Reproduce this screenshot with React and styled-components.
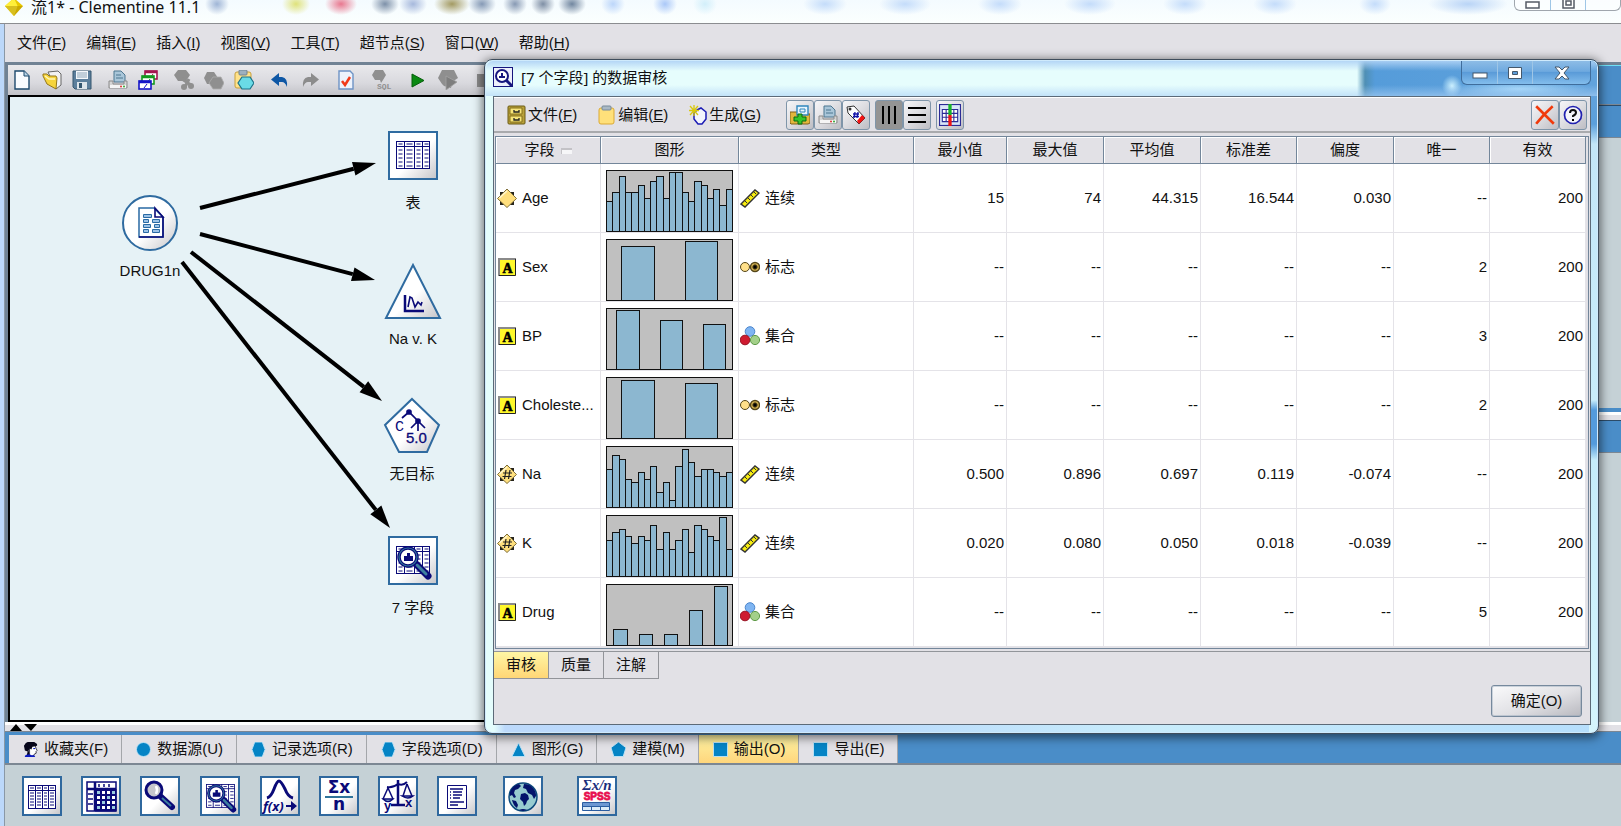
import React, { useState } from "react";
import styled, { createGlobalStyle } from "styled-components";

const SANS = `"Liberation Sans", "Noto Sans CJK SC", sans-serif`;
const NAVY = "#0a0a78";

const GlobalStyle = createGlobalStyle`
  * { box-sizing: border-box; }
  body {
    margin: 0;
    font-family: ${SANS};
    font-size: 15px;
    line-height: 20px;
    color: #111;
    overflow: hidden;
  }
  button { font: inherit; color: inherit; margin: 0; padding: 0; border: 0; background: none; }
  svg { display: block; flex: none; }
`;

// ================= Main window =================
const Shell = styled.div`
  position: relative;
  display: flex;
  flex-direction: column;
  min-height: 100vh;
  padding-left: 5px;
  background: linear-gradient(90deg, #bcd8fa 4px, #8a98a6 4px, #8a98a6 5px, transparent 5px);
`;

const blob = (x, color, w = 12) =>
  `radial-gradient(ellipse ${w}px 11px at ${x}px 4px, ${color}, transparent)`;

const TitleBar = styled.header`
  display: flex;
  justify-content: space-between;
  height: 24px;
  margin-left: -5px;
  padding-left: 5px;
  overflow: hidden;
  border-bottom: 1px solid #8b8d90;
  background:
    ${[
      blob(217, "#9fb5d6"), blob(296, "#dfe27a", 14), blob(341, "#e8788f", 16), blob(385, "#7d90a8", 14),
      blob(413, "#a6b8dc", 14), blob(452, "#a39a62", 18), blob(482, "#8599b5", 14), blob(515, "#8799b3"),
      blob(543, "#7e8ea4"), blob(572, "#71869f", 14), blob(613, "#bcd6fa"), blob(665, "#aac8f8"),
      blob(705, "#d2effa"), blob(825, "#c4dcfa", 22), blob(905, "#c4dcfa", 26), blob(1000, "#c4dcfa", 22),
      blob(1090, "#c4dcfa", 26), blob(1185, "#c4dcfa", 22), blob(1275, "#c4dcfa", 22), blob(1375, "#c4dcfa", 16),
      blob(1468, "#b9d4f6", 40),
    ].join(",")},
    linear-gradient(#f4fbff, #fbfffe);
`;

const TitleText = styled.h1`
  display: flex;
  align-items: center;
  align-self: flex-end;
  gap: 8px;
  margin: 0 0 5px;
  font: 400 16px/22px "Noto Sans", "Noto Sans CJK SC", sans-serif;
`;

const WindowButtons = styled.div`
  display: flex;
  align-self: flex-start;
  height: ${({ $tall }) => ($tall ? 24 : 11)}px;
  border: 1px solid ${({ $tall }) => ($tall ? "#3f6d9c" : "#9fa6ad")};
  border-top: 0;
  border-radius: 0 0 6px 6px;
  overflow: hidden;
  background: ${({ $tall }) =>
    $tall ? "linear-gradient(#8dbce6, #6ea9df 45%, #5a9bd8 50%, #83bdec)" : "rgba(255,255,255,.6)"};
`;

const WindowButton = styled.button`
  display: flex;
  align-items: center;
  justify-content: center;
  width: ${({ $wide }) => ($wide ? 58 : 35)}px;
  border-left: 1px solid #9fc6e6;
  &:first-child { border-left: 0; }
`;

const MenuBar = styled.nav`
  display: flex;
  align-items: center;
  gap: 20px;
  height: 38px;
  padding-left: 12px;
  background: #e2e1e6;
`;

const Work = styled.main`
  display: flex;
  flex: 1;
  padding: 3px 0 0 3px;
  background: #708294;
`;

const StreamColumn = styled.section`
  display: flex;
  flex: 1;
  flex-direction: column;
`;

const ToolBar = styled.div`
  display: flex;
  align-items: center;
  gap: 16px;
  height: 30px;
  padding-left: 4px;
  background: linear-gradient(#e9e9ec, #d9d9de 60%, #c3c3c8);
`;

const ToolGroup = styled.div`
  display: flex;
  gap: 10px;
`;

const ToolButton = styled.button`
  width: 20px;
  height: 20px;
`;

const Canvas = styled.div`
  position: relative;
  flex: 1;
  border: solid #000;
  border-width: 2px 0 2px 2px;
  background: #e6f2f6;
`;

const Links = styled.svg`
  position: absolute;
  inset: 0;
`;

const Node = styled.figure`
  position: absolute;
  left: ${({ $x }) => $x}px;
  top: ${({ $y }) => $y}px;
  display: flex;
  flex-direction: column;
  align-items: center;
  gap: 9px;
  width: 90px;
  margin: 0;
`;

const SidePanel = styled.aside`
  display: flex;
  flex-direction: column;
  width: 256px;
  background: #c5d1d6;
`;

const SideBar = styled.div`
  height: ${({ $tall }) => ($tall ? 40 : 33)}px;
  background: #4a8dc8;
  border-top: 1px solid ${({ $tall }) => ($tall ? "#6fe0f5" : "#2c4b68")};
  border-bottom: 1px solid #7c8793;
`;

const SideSplit = styled.div`
  height: 12px;
  border-top: 4px solid #4a8dc8;
  background: linear-gradient(#fff 3px, #e2e1e6 3px);
`;

const SideBody = styled.div`
  flex: 1;
`;

const Splitter = styled.div`
  height: 10px;
  padding: 2px 0 0 5px;
  border-bottom: 1px solid #7c8793;
  background: linear-gradient(#fff 3px, #e2e1e6 3px);
`;

const PaletteTabs = styled.div`
  display: flex;
  height: 33px;
  padding: 3px 0 0 4px;
  background: #4a8dc8;
  border-bottom: 2px solid #7c8793;
`;

const PaletteTab = styled.button`
  display: flex;
  align-items: center;
  gap: 6px;
  padding: 0 13px 0 14px;
  white-space: nowrap;
  border-right: 1px solid #a4a6aa;
  background: ${({ $active }) => ($active ? "linear-gradient(#fdf3a4, #ffd67c)" : "#e2e1e6")};
`;

const Palette = styled.div`
  display: flex;
  gap: 19px;
  height: 61px;
  padding: 11px 0 0 17px;
  background: #c5d1d6;
`;

const PaletteButton = styled.button`
  width: 40px;
  height: 40px;
  margin-left: ${({ $gap }) => $gap || 0}px;
  border: 2px solid #2f689e;
  background: linear-gradient(135deg, #fff 55%, #c9c9cc);
`;

// ================= Audit window =================
const Dialog = styled.section`
  position: absolute;
  top: 59px;
  left: 484px;
  right: 22px;
  display: flex;
  flex-direction: column;
  padding: 0 7px 8px 8px;
  border: 1px solid #3f4d5c;
  border-radius: 8px;
  box-shadow: inset 0 0 0 1px #cfeafc, 0 2px 10px 2px rgba(0, 0, 0, .5);
  background:
    linear-gradient(#6ba7dd 0, #5b9fdb 64px, #c3e6f8 84px, #c9edfb 340px, #549bdc 350px, #549bdc 384px, #c5ecfa 400px, #d5f5fd) right / 9px 100% no-repeat,
    linear-gradient(90deg, #e4fdfc 9px, #bcd9fb 20px, #b8d8fc 30%, #c8ecfb 60%, #b6defc);
`;

const DialogTitle = styled.header`
  display: flex;
  justify-content: space-between;
  height: 35px;
  margin: 1px -6px 0 -7px;
  padding: 0 6px 0 7px;
  border-radius: 7px 7px 0 0;
  background:
    linear-gradient(rgba(175, 210, 245, .9), transparent 10px, transparent 24px, rgba(170, 208, 245, .6)),
    radial-gradient(ellipse 10px 11px at calc(100% - 145px) 25px, #cdf1ff, transparent),
    radial-gradient(ellipse 70px 9px at calc(100% - 78px) 28px, #a4d6f8, transparent),
    linear-gradient(90deg, #e6fdfd calc(100% - 240px), #4f8fb4 calc(100% - 232px), #559cda calc(100% - 222px), #62a3dc);
`;

const DialogCaption = styled.h2`
  display: flex;
  align-items: center;
  gap: 8px;
  margin: 0 0 3px;
  font: 400 15px/20px "Noto Sans", "Noto Sans CJK SC", sans-serif;
`;

const DialogBody = styled.div`
  border: 1px solid #5c6a78;
  background: #e2e1e6;
`;

const DialogTools = styled.div`
  display: flex;
  align-items: center;
  height: 36px;
  padding: 0 3px 0 13px;
  border-top: 1px solid #fff;
  border-bottom: 2px solid #a9aaad;
`;

const MenuButton = styled.button`
  display: flex;
  align-items: center;
  gap: 1px;
  margin-right: 20px;
  white-space: nowrap;
`;

const ButtonGroup = styled.div`
  display: flex;
  margin-left: 5px;
  &:last-child { margin-left: auto; }
`;

const IconButton = styled.button`
  display: flex;
  align-items: center;
  justify-content: center;
  width: 28px;
  height: 30px;
  border: 1px solid #7f95a9;
  border-radius: 3px;
  background: ${({ $on }) => ($on ? "#949494" : "linear-gradient(135deg, #f6f6f8, #dddde1 50%, #bdbdc3)")};
`;

const TableFrame = styled.div`
  margin: 3px 1px 2px 1px;
  padding: 0 4px 1px 0;
  border: 1px solid #73869a;
`;

const Table = styled.table`
  width: 100%;
  table-layout: fixed;
  border-collapse: separate;
  border-spacing: 0;
  background: #fff;
`;

const Th = styled.th`
  height: 27px;
  padding: 0;
  font-weight: 400;
  background: #e2e1e6;
  border: solid #73869a;
  border-width: 0 1px 1px 0;
  box-shadow: inset 1px 1px #fff;
`;

const SortMark = styled.span`
  display: inline-block;
  width: 11px;
  height: 6px;
  margin-left: 6px;
  border: solid #c3c2c6;
  border-width: 2px 0 0 1px;
  background: #f6f6f8;
  vertical-align: middle;
`;

const Td = styled.td`
  height: 69px;
  padding: ${({ $chart }) => ($chart ? "6px 0 0 5px" : "0 2px 0 1px")};
  text-align: ${({ $num }) => ($num ? "right" : "left")};
  border: solid #e4e3e8;
  border-width: 0 1px 1px 0;
`;

const IconText = styled.div`
  display: flex;
  align-items: center;
  gap: 5px;
  white-space: nowrap;
`;

const SheetTabs = styled.div`
  display: flex;
  border-top: 1px solid #92959a;
`;

const SheetTab = styled.button`
  width: 55px;
  height: 27px;
  border: solid #929499;
  border-width: 0 1px 1px 0;
  background: ${({ $active }) => ($active ? "linear-gradient(#fff6a4, #ffd676)" : "#e2e1e6")};
`;

const DialogFooter = styled.footer`
  display: flex;
  justify-content: flex-end;
  padding: 6px 8px 7px;
`;

const OkButton = styled.button`
  width: 91px;
  height: 32px;
  border: 1px solid #76899d;
  border-radius: 3px;
  box-shadow: inset 0 0 0 1px rgba(140, 160, 180, .4);
  background: linear-gradient(160deg, #fafafb, #e0e0e4 55%, #b9b9bf);
`;

// ================= Icons =================
const Icon = ({ size = 20, box = 20, children }) => (
  <svg width={size} height={size} viewBox={`0 0 ${box} ${box}`} aria-hidden="true">{children}</svg>
);

const Gem = () => (
  <Icon size={18}>
    <path d="M10 0 20 9 10 20 0 9z" fill="#e8c800" />
    <path d="M10 0 14 9 10 20 0 9z" fill="#ffef3a" />
    <path d="M0 9h20L10 20z" fill="#a88600" opacity=".45" />
  </Icon>
);

const NewFile = () => (
  <Icon><path d="M3 1h9l5 5v13H3z" fill="#fafcff" stroke="#1e4a6e" strokeWidth="1.4" /><path d="M12 1v5h5" fill="#b8d3e6" stroke="#1e4a6e" /></Icon>
);

const OpenFile = () => (
  <Icon>
    <path d="M6 2 16 1l3 3v11l-5 4z" fill="#f2f2f2" stroke="#666" />
    <path d="M1 4h4l2 2h7l1 2-1 11-9-5-4-8z" fill="#f6d43c" stroke="#94771a" />
    <path d="m3 6 4 3h6" fill="none" stroke="#fff6b8" strokeWidth="1.5" />
  </Icon>
);

const SaveFile = () => (
  <Icon>
    <path d="M1 1h18v18H3l-2-2z" fill="#5c7f9c" stroke="#34566f" />
    <path d="M4 1h12v8H4z" fill="#f4f8fb" /><path d="M5 3h10M5 5h10M5 7h10" stroke="#8da5b8" />
    <path d="M5 12h10v7H5z" fill="#dce4ea" /><path d="M7 13h3v5H7z" fill="#34566f" />
  </Icon>
);

const Printer = () => (
  <Icon>
    <path d="M6 1h7l4 4v7H6z" fill="#a9c6d9" stroke="#4d7690" /><path d="M8 5h5M8 8h7" stroke="#4d7690" />
    <path d="M1 11h4v3h11v-3h3v7H1z" fill="#d5d5d5" stroke="#8b8b8b" />
    <path d="M2 15h16v3H2z" fill="#f5f5f5" /><circle cx="13" cy="16.500" r="1" fill="#d33" /><circle cx="16" cy="16.500" r="1" fill="#3a3" />
  </Icon>
);

const StackIcon = () => (
  <Icon>
    {[[7, 1, "#a3164f"], [4, 6, "#139a1f"], [1, 11, "#1414c8"]].map(([x, y, c]) => (
      <g key={c}>
        <rect x={x} y={y} width="12" height="8" fill="#fff" stroke={c} strokeWidth="1.6" />
        <path d={`M${x} ${y + 1}h12`} stroke={c} strokeWidth="2.500" />
        <path d={`m${x + 5} ${y + 7} 3-4`} stroke={c} />
      </g>
    ))}
  </Icon>
);

const CutIcon = () => (
  <Icon>
    <path d="M4 0h8l4 5-4 6H4L0 5z" fill="#8f8f8f" />
    <path d="m8 9 9 6M15 9l-4 8" stroke="#8f8f8f" strokeWidth="3" /><circle cx="10" cy="17" r="3" fill="#8f8f8f" /><circle cx="17" cy="16" r="3" fill="#8f8f8f" />
  </Icon>
);

const CopyIcon = () => (
  <Icon>
    <path d="M3 2h7l4 6-4 6H3L0 8z" fill="#8f8f8f" />
    <path d="M9 7h8l3 6-3 6H9l-4-6z" fill="#8f8f8f" stroke="#adadad" strokeWidth=".8" />
  </Icon>
);

const PasteIcon = () => (
  <Icon>
    <rect x="1" y="2" width="16" height="16" rx="2" fill="#ffe28a" stroke="#c79f3c" />
    <rect x="5" y="0" width="8" height="5" rx="1" fill="#9db0bf" stroke="#6f8393" />
    <path d="M8 7h8l4 6-4 6H8l-4-6z" fill="#6adbe6" stroke="#1b7187" strokeWidth="1.2" />
  </Icon>
);

const UndoIcon = () => (
  <Icon><path d="M1 9.500 9 3v4h3q6 1 5 10-2-5-5-5H9v4z" fill="#0e57a5" /></Icon>
);

const RedoIcon = () => (
  <Icon><path d="M19 9.500 11 3v4H8q-6 1-5 10 2-5 5-5h3v4z" fill="#8c8c8c" /></Icon>
);

const CheckIcon = () => (
  <Icon><path d="M3 1h11l3 3v15H3z" fill="#edf3fc" stroke="#6d93c5" strokeWidth="1.4" /><path d="m6 11 3 4 5-8" fill="none" stroke="#f03a1a" strokeWidth="2.500" /></Icon>
);

const SqlIcon = () => (
  <Icon>
    <path d="M3 0h8l3 5-3 5-2 3-1-3H3L0 5z" fill="#8f8f8f" />
    <text x="5" y="19" fontSize="8" fontWeight="700" fill="#8f8f8f" fontFamily="Liberation Mono, monospace">SQL</text>
  </Icon>
);

const PlayIcon = () => <Icon><path d="m4 4 12 6.500L4 17z" fill="#0a8a12" stroke="#065e0b" /></Icon>;

const PlayPart = () => (
  <Icon><path d="M4 0h12l4 8-6 4-1 6-7-2-2-2-4-6z" fill="#8f8f8f" /><path d="m8 6 11 6-11 8z" fill="#7e7e7e" stroke="#a2a2a2" strokeWidth=".8" /></Icon>
);

const StopIcon = () => <Icon><path d="M3 4h13v13H3z" fill="#8c8c8c" /></Icon>;

const Defs = () => (
  <defs>
    <linearGradient id="plate" x1="0" y1="0" x2="1" y2="1">
      <stop offset=".55" stopColor="#fff" /><stop offset="1" stopColor="#c4c4c8" />
    </linearGradient>
  </defs>
);

// grid drawing shared by the table and audit icons, 34 x 28
const GridArt = () => (
  <g stroke={NAVY} fill="none">
    <rect x=".5" y=".5" width="33" height="27" fill="#fff" />
    <path d="M0 5.500h34M8.500 0v28M18.500 0v28M26.500 0v28" />
    {[3, 9, 13, 17, 21, 25].map((y) => <path key={y} d={`M2.500 ${y}h4M10.500 ${y}h6M20.500 ${y}h4M28.500 ${y}h4`} />)}
  </g>
);

const AuditArt = () => (
  <g>
    <GridArt />
    <path d="m19 17 13 13" stroke={NAVY} strokeWidth="7" strokeLinecap="round" />
    <path d="m21 19 9 9" stroke="#3d7f9f" strokeWidth="3" strokeLinecap="round" />
    <circle cx="12" cy="11" r="9" fill="#fff" stroke={NAVY} strokeWidth="3.500" />
    <circle cx="12" cy="11" r="9" fill="none" stroke="#2f739a" strokeWidth="1.200" />
    <path d="M8 15v-5h3V7h3v3h3v5z" fill={NAVY} />
  </g>
);

const NodeShape = ({ kind }) => (
  <svg width="58" height="58" viewBox="0 0 58 58" aria-hidden="true">
    <Defs />
    <g fill="url(#plate)" stroke="#2f6ba0" strokeWidth="2">
      {kind === "source" && <circle cx="29" cy="29" r="27" />}
      {(kind === "table" || kind === "audit") && <rect x="5" y="6" width="48" height="47" />}
      {kind === "plot" && <path d="M29 3 56 56H2z" />}
      {kind === "model" && <path d="M29 2 56 28 44 55H16L2 28z" />}
    </g>
    {kind === "source" && (
      <g fill="#fff" stroke="#2a6aa4">
        <path d="M18 14h15l9 9v20H18z" strokeWidth="1.500" />
        <path d="M42 23v20H18M34 14v9h8z" stroke={NAVY} strokeWidth="1.600" fill="none" />
        <path d="M22.500 20.500h8v3h-8zM22.500 25.500h5v3h-5zM31.500 25.500h7v3h-7zM22.500 30.500h7v3h-7zM33.500 30.500h5v3h-5zM22.500 35.500h5v3h-5zM31.500 35.500h7v3h-7z" fill="#9cc2e6" />
      </g>
    )}
    {kind === "table" && <g transform="translate(12 15)"><GridArt /></g>}
    {kind === "audit" && <g transform="translate(12 15)"><AuditArt /></g>}
    {kind === "plot" && (
      <g fill="none" stroke={NAVY}>
        <path d="M21 33v16h19" strokeWidth="2.500" />
        <path d="m24 45 2-10 2 1 3 9 3-5 3 3 1-3" strokeWidth="1.600" />
      </g>
    )}
    {kind === "model" && (
      <g stroke={NAVY} strokeWidth="1.700" fill={NAVY}>
        <path d="m19 21 7-6 9 9-7 7M35 24v10M35 24l7 7" fill="none" />
        <circle cx="26" cy="15" r="2" /><circle cx="35" cy="24" r="2" />
        <text x="12" y="34" fontSize="15" stroke="none" fontFamily="Liberation Mono, monospace">C</text>
        <text x="23" y="46" fontSize="15" strokeWidth=".3" fontFamily="Liberation Sans, sans-serif">5.0</text>
      </g>
    )}
  </svg>
);

const PaletteArt = ({ kind }) => (
  <svg width="36" height="36" viewBox="0 0 36 36" aria-hidden="true">
    {kind === "table" && (
      <g stroke={NAVY} fill="none">
        <rect x="4.500" y="7.500" width="27" height="23" fill="#fff" />
        <path d="M4 12.500h28M11.500 8v23M18.500 8v23M24.500 8v23" />
        {[10, 15, 18, 21, 24, 27].map((y) => <path key={y} d={`M6 ${y}h4M13 ${y}h4M20 ${y}h3M26 ${y}h4`} />)}
      </g>
    )}
    {kind === "matrix" && (
      <g stroke={NAVY}>
        <rect x="4" y="4" width="29" height="29" fill="#fff" strokeWidth="1.500" />
        <path d="M12 11h21v22H12z" fill={NAVY} />
        <path d="M12 4v29M4 11h29" strokeWidth="2.500" />
        <g fill="#fff" stroke="none">
          {[0, 1, 2, 3].map((r) => [0, 1, 2, 3].map((c) => <rect key={`${r}${c}`} x={14 + c * 5} y={13 + r * 5} width="3" height="3" fill={(r + c) % 3 ? "#fff" : "#9ccce0"} />))}
        </g>
        {[16, 21, 26].map((v) => <path key={v} d={`M${v} 6v3M5 ${v}h5`} strokeWidth="1.500" />)}
      </g>
    )}
    {kind === "analysis" && (
      <g>
        <path d="m18 18 12 11" stroke={NAVY} strokeWidth="6" strokeLinecap="round" />
        <path d="m20 20 9 8" stroke="#3d7f9f" strokeWidth="2" />
        <circle cx="12" cy="12" r="8" fill="#c6c6cc" stroke={NAVY} strokeWidth="3" />
        <path d="M14 8q2 4 0 8" stroke="#fff" strokeWidth="2.500" fill="none" />
      </g>
    )}
    {kind === "audit" && <g transform="translate(4 6) scale(.85)"><AuditArt /></g>}
    {kind === "transform" && (
      <g fill={NAVY}>
        <path d="M5 20q4-1 7-9 3-8 5-8t6 8q3 8 8 9" fill="none" stroke={NAVY} strokeWidth="3" />
        <text x="1" y="33" fontSize="13" fontWeight="700" fontStyle="italic" fontFamily="Noto Sans, sans-serif">f(x)</text>
        <path d="M24 27h5v-4l6 5-6 5v-4h-5z" />
      </g>
    )}
    {kind === "stats" && (
      <g fill={NAVY} fontFamily="DejaVu Sans, sans-serif" fontWeight="700">
        <text x="18" y="15" fontSize="17" textAnchor="middle">Σx</text>
        <path d="M4 18h28v2H4z" fill="#2f739a" /><text x="18" y="32" fontSize="17" textAnchor="middle">n</text>
      </g>
    )}
    {kind === "means" && (
      <g stroke={NAVY} fill="none" strokeWidth="1.500">
        <path d="M18 2v25M11 27h14" strokeWidth="2.500" /><path d="M7 9q6 1 11-3 5 2 9-2" strokeWidth="2" />
        <path d="M8 10 3 21M8 10l5 11M27 6l-4 12M27 6l5 12" /><path d="M3 21h10q-5 5-10 0zM22 18h11q-5 4-11 0z" fill="#9ccce0" />
        <g fill={NAVY} stroke="none" fontSize="13" fontWeight="700" fontFamily="Liberation Sans, sans-serif"><text x="4" y="32">y</text><text x="25" y="29">x</text></g>
      </g>
    )}
    {kind === "report" && (
      <g stroke={NAVY} fill="#fff">
        <path d="M8.500 7.500h19v23h-19z" /><path d="M11 11h13M11 27h8M14 14h9M14 17h9M14 20h7M11 24h14" strokeWidth="1.500" />
        <path d="M11 14h1M11 17h1M11 20h1" strokeWidth="1.500" />
      </g>
    )}
    {kind === "globals" && (
      <g>
        <circle cx="18" cy="19" r="14" fill="#97cbd0" stroke="#0d4a7c" strokeWidth="1.500" />
        <path d="M5 14q3-7 9-8l2 2-3 3-3 1-1 3 2 4-2 1-2-3-2 1zM19 6q6 0 9 4 3 3 3 8l-2 3-2-4-4-2-2-4-3-1zM16 16l4-1 3 2 1 4-2 2-1 3-2 2-1-4-3-3zM7 22l4 1 2 4-1 3q-4-3-5-8zM14 32q4-2 8 0l-4 1z" fill="#04146b" />
      </g>
    )}
    {kind === "spss" && (
      <g fontWeight="700">
        <text x="18" y="12" fontSize="15" textAnchor="middle" fill="#1a2e7c" fontStyle="italic" fontFamily="Liberation Serif, serif">Σx/n</text>
        <text x="18" y="22" fontSize="10" textAnchor="middle" fill="#e80e4e" stroke="#e80e4e" strokeWidth=".8" fontFamily="Liberation Sans, sans-serif">SPSS</text>
        <path d="M3.500 24.500h27v8h-27zM3.500 28.500h27M12.500 25v8M21.500 25v8" fill="#dcebf8" stroke="#2a5ca0" /><path d="M4 25h26v3H4z" fill="#6d97d2" />
      </g>
    )}
  </svg>
);

const TabMark = ({ kind }) => (
  <Icon size={15} box={16}>
    {kind === "face" ? (
      <g>
        <path d="M7 4h6l1 3 1 2-1 1v2l-2 1-1 2H7z" fill="#fff" stroke="#05051a" strokeWidth=".8" />
        <path d="M5 0h7l3 2v2l-5 1-1 3-2-1-1 2 1 5H4l1-4-3-1-1-5 2-3z" fill="#05051a" />
        <path d="M2 15q1-2 5-2l2 1h3l1 2H2z" fill="#0a1ac0" />
        <path d="M11 7h2" stroke="#0a1ac0" strokeWidth="1.200" />
      </g>
    ) : (
      <g fill="#0584c5" stroke="#bfe4f7" strokeWidth="1">
        {kind === "circle" && <circle cx="8" cy="8" r="7.500" />}
        {kind === "hexagon" && <path d="M4 0h8l3 8-3 8H4L1 8z" />}
        {kind === "triangle" && <path d="m8 1 7 14.500H1z" />}
        {kind === "pentagon" && <path d="m8 0 8 6-3 9.500H3L0 6z" />}
        {kind === "square" && <path d="M.5.5h15v15H.5z" />}
      </g>
    )}
  </Icon>
);

const FieldIcon = ({ kind }) =>
  kind === "string" ? (
    <Icon>
      <rect x="2" y="2" width="17" height="17" fill="#fff82a" />
      <path d="M2 19V2h17" fill="none" stroke="#8a8a8a" strokeWidth="2" />
      <path d="M2 18.500h16.500V2" fill="none" stroke="#222" />
      <text x="10.500" y="16" fontSize="14" fontWeight="700" textAnchor="middle" fontFamily="Liberation Serif, serif" stroke="#000" strokeWidth=".6">A</text>
    </Icon>
  ) : (
    <Icon>
      <path d="M3 4h3v3H3zM13 4h4v4h-4zM3 13h4v4H3zM13 13h4v4h-4z" fill="#26241c" />
      <path d="m10 1 9.500 9.500-9.500 9-9.500-9z" fill="#ffdf7d" stroke="#80703a" />
      <path d="m2.500 10 7.500-7" stroke="#fff6cf" strokeWidth="1.500" />
      {kind === "real" && <path d="m9 6-1.500 9M13 6l-1.500 9M6 9h9M5.500 12.500h9" stroke="#222" strokeWidth="1.200" />}
    </Icon>
  );

const TypeIcon = ({ kind }) => (
  <Icon>
    {kind === "连续" && (
      <g><path d="m1 16 14-14 4 3L5 19z" fill="#f7ec10" stroke="#333" strokeWidth="1.400" /><path d="m5 13 2 2M8 10l2 2M11 7l2 2M14 4l2 2" stroke="#333" /></g>
    )}
    {kind === "标志" && (
      <g stroke="#54461a"><circle cx="5" cy="10" r="4.500" fill="#ffe08a" /><circle cx="15" cy="10" r="4.500" fill="#d6b453" strokeWidth="1.400" /><circle cx="15" cy="10" r="2.200" fill="#000" /></g>
    )}
    {kind === "集合" && (
      <g><circle cx="10" cy="5.500" r="4.800" fill="#7fb5f2" stroke="#4c86cc" /><circle cx="5" cy="14" r="4.800" fill="#cf1b30" stroke="#971323" /><circle cx="15" cy="14" r="4.600" fill="#a3d089" stroke="#5f9a48" /></g>
    )}
  </Icon>
);

const CloseX = () => <Icon size={22}><path d="M2 2q7 7 16 16M17 2Q9 9 2 18" fill="none" stroke="#f03a0c" strokeWidth="2.400" /></Icon>;

const HelpIcon = () => (
  <Icon><circle cx="10" cy="10" r="8.500" fill="#f5f5fb" stroke="#2020b0" strokeWidth="1.700" /><path d="M7 8q0-3 3-3t3 2.500q0 2-3 3.500v1" fill="none" stroke="#111" strokeWidth="2" /><path d="M9 14h2v2H9z" /></Icon>
);

// ================= Data =================
const MENUS = [
  ["文件", "F"], ["编辑", "E"], ["插入", "I"], ["视图", "V"],
  ["工具", "T"], ["超节点", "S"], ["窗口", "W"], ["帮助", "H"],
];

const TOOLS = [
  [["新建流", NewFile], ["打开流", OpenFile], ["保存流", SaveFile]],
  [["打印", Printer], ["保存超节点", StackIcon]],
  [["剪切", CutIcon], ["复制", CopyIcon], ["粘贴", PasteIcon]],
  [["撤消", UndoIcon], ["重做", RedoIcon]],
  [["流属性", CheckIcon]],
  [["SQL 预览", SqlIcon]],
  [["执行流", PlayIcon], ["执行选择", PlayPart]],
  [["停止", StopIcon]],
];

const NODES = [
  { kind: "source", label: "DRUG1n", x: 95, y: 97 },
  { kind: "table", label: "表", x: 358, y: 29 },
  { kind: "plot", label: "Na v. K", x: 358, y: 165 },
  { kind: "model", label: "无目标", x: 357, y: 300 },
  { kind: "audit", label: "7 字段", x: 358, y: 434 },
];

const LINKS = [
  [190, 111, 366, 66],
  [190, 137, 365, 183],
  [181, 155, 372, 304],
  [172, 165, 380, 431],
];

const PALETTES = [
  ["face", "收藏夹(F)"], ["circle", "数据源(U)"], ["hexagon", "记录选项(R)"], ["hexagon", "字段选项(D)"],
  ["triangle", "图形(G)"], ["pentagon", "建模(M)"], ["square", "输出(O)"], ["square", "导出(E)"],
];

const OUTPUTS = [
  ["table", "表"], ["matrix", "矩阵"], ["analysis", "分析"], ["audit", "数据审核", 1], ["transform", "变换", 1],
  ["stats", "统计量"], ["means", "均值"], ["report", "报告"], ["globals", "设置全局量", 7], ["spss", "SPSS 过程", 15],
];

const COLUMNS = [
  ["字段", 105], ["图形", 138], ["类型", 175], ["最小值", 93], ["最大值", 97], ["平均值", 97],
  ["标准差", 96], ["偏度", 97], ["唯一", 96], ["有效", 96],
];

const histogram = (heights) => heights.map((h, i) => [Math.round(i * 6.3), h, Math.round((i + 1) * 6.3) - Math.round(i * 6.3)]);

const FIELDS = [
  {
    name: "Age", storage: "integer", type: "连续",
    bars: histogram([30, 39, 55, 39, 39, 46, 33, 50, 55, 33, 59, 59, 39, 30, 50, 46, 33, 42, 26, 42]),
    values: ["15", "74", "44.315", "16.544", "0.030", "--", "200"],
  },
  {
    name: "Sex", storage: "string", type: "标志", bars: [[15, 54, 33], [79, 59, 32]],
    values: ["--", "--", "--", "--", "--", "2", "200"],
  },
  {
    name: "BP", storage: "string", type: "集合", bars: [[10, 59, 23], [54, 49, 22], [97, 45, 22]],
    values: ["--", "--", "--", "--", "--", "3", "200"],
  },
  {
    name: "Choleste...", storage: "string", type: "标志", bars: [[15, 58, 33], [79, 55, 32]],
    values: ["--", "--", "--", "--", "--", "2", "200"],
  },
  {
    name: "Na", storage: "real", type: "连续",
    bars: histogram([38, 52, 48, 28, 25, 35, 28, 41, 15, 25, 7, 41, 58, 45, 31, 38, 38, 35, 31, 35]),
    values: ["0.500", "0.896", "0.697", "0.119", "-0.074", "--", "200"],
  },
  {
    name: "K", storage: "real", type: "连续",
    bars: histogram([36, 44, 47, 40, 33, 40, 36, 51, 27, 44, 27, 36, 47, 24, 51, 47, 40, 36, 59, 27]),
    values: ["0.020", "0.080", "0.050", "0.018", "-0.039", "--", "200"],
  },
  {
    name: "Drug", storage: "string", type: "集合",
    bars: [[7, 16, 14], [33, 11, 13], [58, 11, 13], [83, 35, 13], [108, 59, 13]],
    values: ["--", "--", "--", "--", "--", "5", "200"],
  },
];

// ================= Parts =================
const Mnemonic = ({ text, letter }) => <span>{text}(<u>{letter}</u>)</span>;

const Chart = ({ bars }) => (
  <svg width="127" height="62" viewBox="0 0 127 62" aria-hidden="true">
    <rect x=".5" y=".5" width="126" height="61" fill="#c0c0c0" stroke="#111" />
    {bars.map(([x, h, w]) => (
      <rect key={x} x={x + 0.5} y={61.5 - h} width={w} height={h} fill="#8cb7d0" stroke="#111" />
    ))}
  </svg>
);

const Arrow = ({ points: [x1, y1, x2, y2] }) => {
  const len = Math.hypot(x2 - x1, y2 - y1);
  const ux = (x2 - x1) / len;
  const uy = (y2 - y1) / len;
  const bx = x2 - ux * 23;
  const by = y2 - uy * 23;
  return (
    <g>
      <line x1={x1} y1={y1} x2={bx} y2={by} stroke="#000" strokeWidth="4" />
      <polygon points={`${x2},${y2} ${bx - uy * 7},${by + ux * 7} ${bx + uy * 7},${by - ux * 7}`} />
    </g>
  );
};

const AuditDialog = () => {
  const [sheet, setSheet] = useState("审核");

  return (
    <Dialog role="dialog" aria-labelledby="audit-title">
      <DialogTitle>
        <DialogCaption id="audit-title">
          <Icon>
            <rect x=".5" y=".5" width="19" height="19" fill="#eef0fc" stroke="#16167e" />
            <circle cx="9" cy="9" r="6" fill="#fff" stroke="#16167e" strokeWidth="2" />
            <path d="m13 13 6 6" stroke="#16167e" strokeWidth="3" /><path d="M6 11V9h2V6h2v3h2v2z" fill="#16167e" />
          </Icon>
          [7 个字段] 的数据审核
        </DialogCaption>
        <WindowButtons $tall>
          <WindowButton aria-label="最小化"><Icon size={16} box={16}><rect x="1" y="8" width="14" height="5" fill="#fff" stroke="#44586c" /></Icon></WindowButton>
          <WindowButton aria-label="最大化"><Icon size={16} box={16}><path d="M1.500 2.500h13v11h-13zM5.500 6.500v3h5v-3z" fill="#fff" stroke="#44586c" fillRule="evenodd" /></Icon></WindowButton>
          <WindowButton $wide aria-label="关闭"><Icon size={16} box={16}><path d="M1 2h4l3 3 3-3h4l-5 6 5 6h-4L8 11l-3 3H1l5-6z" fill="#fff" stroke="#44586c" /></Icon></WindowButton>
        </WindowButtons>
      </DialogTitle>

      <DialogBody>
        <DialogTools>
          <MenuButton>
            <Icon><rect x="1" y="1" width="17" height="18" rx="1" fill="#b9a13a" stroke="#6b5b16" /><path d="M3 3h12v6H3zM3 11h12v6H3z" fill="#f7e57a" stroke="#85701c" /><path d="M7 5v2h5V5M7 13v2h5v-2" fill="none" stroke="#222" strokeWidth="1.300" /></Icon>
            <Mnemonic text="文件" letter="F" />
          </MenuButton>
          <MenuButton>
            <Icon><rect x="2" y="3" width="15" height="16" rx="2" fill="#ffe07a" stroke="#dba934" /><rect x="5" y="1" width="9" height="4" rx="1" fill="#a9b8c4" stroke="#76899a" /></Icon>
            <Mnemonic text="编辑" letter="E" />
          </MenuButton>
          <MenuButton>
            <Icon><path d="m9 5 4-2 5 4v7l-4 5h-4l-4-5V8z" fill="#f2f4fd" stroke="#1b1bb4" strokeWidth="1.500" /><path d="m2 1 8 9M10 1 2 10M6 0v11M1 5.500h10" stroke="#d9c80e" strokeWidth="1.300" /></Icon>
            <Mnemonic text="生成" letter="G" />
          </MenuButton>
          <ButtonGroup>
            <IconButton aria-label="添加到工程">
              <Icon><path d="M0 7h7l2 2h11v9l-2 1H1l-1-1z" fill="#e2b63c" stroke="#80601a" /><path d="M7 1h11v9H7z" fill="#e7f5fd" stroke="#2f86bd" strokeWidth="1.400" /><path d="M10 4h5v3h-5z" fill="none" stroke="#2f86bd" /><path d="M8 9h4v3h4v4h-4v3H8v-3H4v-4h4z" fill="#35c42b" stroke="#0b6b10" /></Icon>
            </IconButton>
            <IconButton aria-label="打印"><Printer /></IconButton>
            <IconButton aria-label="显示标签">
              <Icon><path d="M1 2 8 1l11 12-6 6L2 8z" fill="#fff" stroke="#333" /><path d="m19 13-6 6-2-3 5-6z" fill="#f31212" /><circle cx="4" cy="4" r="1.500" fill="#333" /><path d="m9 7-1 6M12 7l-1 6M7 9h6M7 11.500h6" stroke="#1414a8" strokeWidth="1.300" /></Icon>
            </IconButton>
          </ButtonGroup>
          <ButtonGroup>
            <IconButton $on aria-label="垂直"><Icon><path d="M3 1h2v18H3zM9 1h2v18H9zM15 1h2v18h-2z" /></Icon></IconButton>
            <IconButton aria-label="水平"><Icon><path d="M1 2h18v2H1zM1 9h18v2H1zM1 16h18v2H1z" /></Icon></IconButton>
          </ButtonGroup>
          <ButtonGroup>
            <IconButton aria-label="交叉字段">
              <Icon size={22}><rect x=".5" y=".5" width="19" height="19" fill="#d9e6f8" stroke="#2b2b96" /><path d="M3 5h14v11H3zM3 8.500h14M3 12h14M6.500 5v11M13.500 5v11" fill="#fff" stroke="#2b2b96" /><path d="M8.500 0h3v10h-3z" fill="#19b32a" /><path d="M8.500 10h3v10h-3z" fill="#ee1414" /></Icon>
            </IconButton>
          </ButtonGroup>
          <ButtonGroup>
            <IconButton aria-label="关闭窗口"><CloseX /></IconButton>
            <IconButton aria-label="帮助"><HelpIcon /></IconButton>
          </ButtonGroup>
        </DialogTools>

        <TableFrame>
          <Table>
            <colgroup>{COLUMNS.map(([name, width]) => <col key={name} width={width} />)}</colgroup>
            <thead>
              <tr>{COLUMNS.map(([name], i) => <Th key={name} scope="col">{name}{i === 0 && <SortMark />}</Th>)}</tr>
            </thead>
            <tbody>
              {FIELDS.map((f) => (
                <tr key={f.name}>
                  <Td><IconText><FieldIcon kind={f.storage} />{f.name}</IconText></Td>
                  <Td $chart><Chart bars={f.bars} /></Td>
                  <Td><IconText><TypeIcon kind={f.type} />{f.type}</IconText></Td>
                  {f.values.map((v, i) => <Td key={COLUMNS[i + 3][0]} $num>{v}</Td>)}
                </tr>
              ))}
            </tbody>
          </Table>
        </TableFrame>

        <SheetTabs role="tablist">
          {["审核", "质量", "注解"].map((t) => (
            <SheetTab key={t} role="tab" aria-selected={sheet === t} $active={sheet === t} onClick={() => setSheet(t)}>{t}</SheetTab>
          ))}
        </SheetTabs>
        <DialogFooter><OkButton>确定(O)</OkButton></DialogFooter>
      </DialogBody>
    </Dialog>
  );
};

// ================= Main App =================
const App = () => {
  const [palette, setPalette] = useState("输出(O)");

  return (
    <Shell>
      <GlobalStyle />
      <TitleBar>
        <TitleText><Gem />流1* - Clementine 11.1</TitleText>
        <WindowButtons>
          <WindowButton aria-label="最小化"><Icon size={15} box={15}><rect x="1" y="4" width="13" height="6" fill="#fff" stroke="#555b66" strokeWidth="1.500" /></Icon></WindowButton>
          <WindowButton aria-label="还原"><Icon size={15} box={15}><path d="M2 0h11v10H2zM5 3h5v4H5z" fill="#fff" stroke="#555b66" strokeWidth="1.500" /></Icon></WindowButton>
          <WindowButton aria-label="关闭" />
        </WindowButtons>
      </TitleBar>
      <MenuBar>
        {MENUS.map(([text, letter]) => <button key={letter}><Mnemonic text={text} letter={letter} /></button>)}
      </MenuBar>

      <Work>
        <StreamColumn>
          <ToolBar>
            {TOOLS.map((group) => (
              <ToolGroup key={group[0][0]}>
                {group.map(([label, Art]) => <ToolButton key={label} aria-label={label}><Art /></ToolButton>)}
              </ToolGroup>
            ))}
          </ToolBar>
          <Canvas>
            <Links width="470" height="600" aria-hidden="true">
              {LINKS.map((points) => <Arrow key={points.join()} points={points} />)}
            </Links>
            {NODES.map(({ kind, label, x, y }) => (
              <Node key={kind} $x={x} $y={y}>
                <NodeShape kind={kind} />
                <figcaption>{label}</figcaption>
              </Node>
            ))}
          </Canvas>
        </StreamColumn>
        <SidePanel>
          <SideBar $tall />
          <SideBar />
          <SideBody />
          <SideSplit />
          <SideBar />
          <SideBody />
        </SidePanel>
      </Work>

      <Splitter>
        <svg width="32" height="7" viewBox="0 0 32 7" aria-hidden="true"><path d="M0 7 6 0l6 7zM14 0h13l-6 7z" /></svg>
      </Splitter>
      <PaletteTabs role="tablist">
        {PALETTES.map(([kind, name]) => (
          <PaletteTab key={name} role="tab" aria-selected={palette === name} $active={palette === name} onClick={() => setPalette(name)}>
            <TabMark kind={kind} />{name}
          </PaletteTab>
        ))}
      </PaletteTabs>
      <Palette>
        {OUTPUTS.map(([kind, label, gap]) => (
          <PaletteButton key={kind} aria-label={label} $gap={gap}><PaletteArt kind={kind} /></PaletteButton>
        ))}
      </Palette>

      <AuditDialog />
    </Shell>
  );
};

export default App;
